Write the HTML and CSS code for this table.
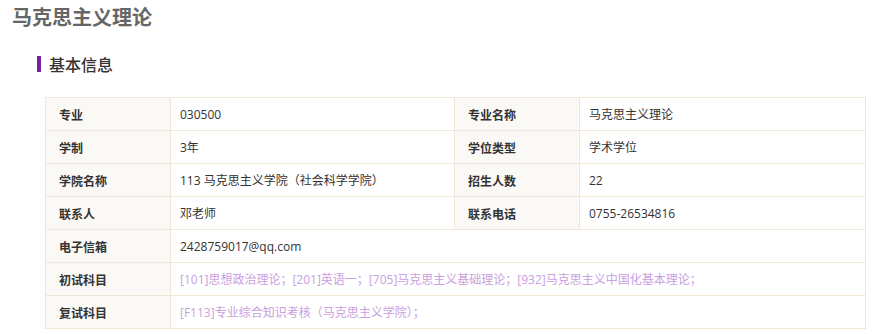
FILE: index.html
```html
<!DOCTYPE html>
<html lang="zh-CN">
<head>
<meta charset="utf-8">
<title>马克思主义理论</title>
<link rel="stylesheet" href="styles.css">
</head>
<body>
<div class="page">
  <h1 class="title">马克思主义理论</h1>
  <h2 class="section">基本信息</h2>
  <table class="info">
    <colgroup>
      <col class="c1"><col class="c2"><col class="c3"><col class="c4">
    </colgroup>
    <tr><th>专业</th><td>030500</td><th>专业名称</th><td>马克思主义理论</td></tr>
    <tr><th>学制</th><td>3年</td><th>学位类型</th><td>学术学位</td></tr>
    <tr><th>学院名称</th><td>113 马克思主义学院（社会科学学院）</td><th>招生人数</th><td>22</td></tr>
    <tr><th>联系人</th><td>邓老师</td><th>联系电话</th><td>0755-26534816</td></tr>
    <tr><th>电子信箱</th><td colspan="3">2428759017@qq.com</td></tr>
    <tr><th>初试科目</th><td colspan="3" class="link">[101]思想政治理论；[201]英语一；[705]马克思主义基础理论；[932]马克思主义中国化基本理论；</td></tr>
    <tr><th>复试科目</th><td colspan="3" class="link">[F113]专业综合知识考核（马克思主义学院）；</td></tr>
  </table>
</div>
</body>
</html>
```

FILE: styles.css
```css
html, body {
  margin: 0;
  padding: 0;
  background: #fff;
}
body {
  font-family: "Open Sans", "Noto Sans CJK SC", sans-serif;
  color: #333;
}
.page {
  padding: 3px 8px 0 12px;
}
.title {
  margin: 0;
  font-size: 20px;
  line-height: 28px;
  font-weight: bold;
  color: #666;
  font-family: "Noto Sans CJK SC", sans-serif;
}
.section {
  margin: 25px 0 0 25px;
  padding-left: 8px;
  border-left: 4px solid #7b1fa2;
  font-size: 16px;
  line-height: 16px;
  font-weight: 500;
  color: #333;
  font-family: "Noto Sans CJK SC", sans-serif;
}
.info {
  margin: 25px 0 0 33px;
  width: 820px;
  border-collapse: collapse;
  table-layout: fixed;
  font-size: 12px;
}
.c1 { width: 125px; }
.c2 { width: 284px; }
.c3 { width: 125px; }
.c4 { width: 286px; }
.info th, .info td {
  border: 1px solid #f2e6d9;
  height: 32px;
  padding: 0 9px;
  text-align: left;
  box-sizing: content-box;
  white-space: nowrap;
}
.info th {
  background: #fbf9f6;
  font-weight: bold;
  padding-left: 13px;
  color: #333;
  font-family: "Noto Sans CJK SC", sans-serif;
}
.info td {
  color: #333;
}
.info td.link {
  color: #c9a0e0;
}
```
